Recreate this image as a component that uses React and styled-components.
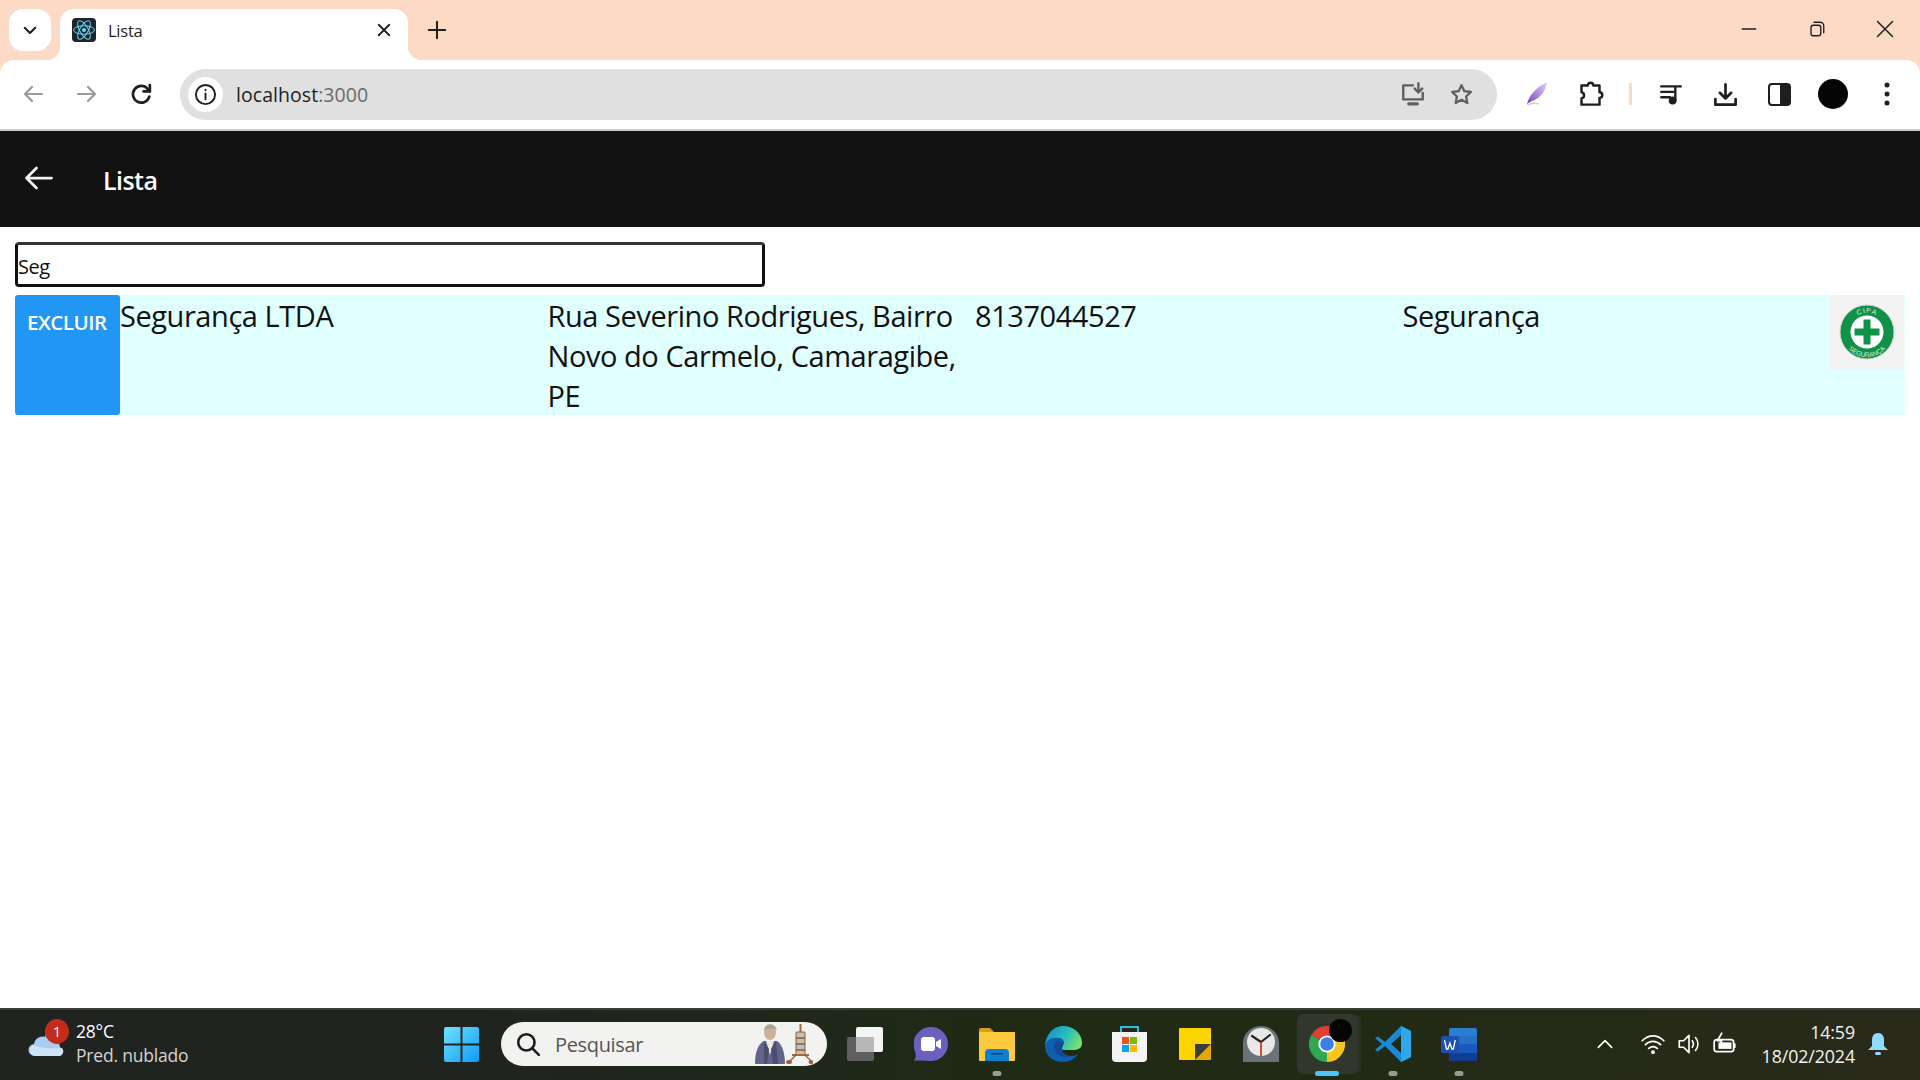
import React from 'react';
import styled, { createGlobalStyle } from 'styled-components';

const uiFont = `"Open Sans", "Noto Sans", sans-serif`;
const peach = '#fddac6';

const Global = createGlobalStyle`
  html, body { margin: 0; padding: 0; height: 100%; background: #fff; }
  * { box-sizing: border-box; }
  body { font-family: ${uiFont}; overflow: hidden; }
`;

const Screen = styled.div`
  width: 1920px;
  height: 1080px;
  display: flex;
  flex-direction: column;
`;

const TabStrip = styled.div`
  height: 60px;
  flex: none;
  background: ${peach};
  display: flex;
  align-items: flex-end;
  padding-left: 9px;
`;
const TabMenu = styled.div`
  width: 42px;
  height: 42px;
  margin-bottom: 9px;
  background: #fff;
  border-radius: 14px;
  display: flex;
  align-items: center;
  justify-content: center;
`;
const Tab = styled.div`
  width: 348px;
  height: 51px;
  margin-left: 9px;
  background: #fff;
  border-radius: 14px 14px 0 0;
  display: flex;
  align-items: center;
  padding: 0 15px 9px 12px;
  color: #1f1f1f;
  font-size: 16.5px;
  letter-spacing: -0.25px;
  position: relative;
  &::before, &::after {
    content: '';
    position: absolute;
    bottom: 0;
    width: 14px;
    height: 14px;
  }
  &::before {
    left: -14px;
    background: radial-gradient(circle at 0 0, ${peach} 14px, #fff 14.5px);
  }
  &::after {
    right: -14px;
    background: radial-gradient(circle at 100% 0, ${peach} 14px, #fff 14.5px);
  }
`;
const TabTitle = styled.span`
  margin-left: 12px;
  flex: 1;
  padding-top: 1px;
`;
const NewTab = styled.div`
  width: 58px;
  height: 30px;
  margin-bottom: 15px;
  display: flex;
  align-items: center;
  justify-content: center;
`;
const WindowButtons = styled.div`
  margin-left: auto;
  height: 60px;
  display: flex;
  align-items: center;
  padding: 0 1px 2px 0;
`;
const WindowButton = styled.div`
  width: 68px;
  display: flex;
  justify-content: center;
`;

const ToolbarShell = styled.div`
  flex: none;
  background: ${peach};
`;
const Toolbar = styled.div`
  height: 71px;
  background: #fff;
  border-bottom: 2px solid #c9c9c9;
  border-radius: 14px 14px 0 0;
  display: flex;
  align-items: center;
  padding: 0 6px 1px 6px;
`;
const NavButton = styled.div`
  width: 54px;
  display: flex;
  justify-content: center;
  flex: none;
`;
const AddressBar = styled.div`
  width: 1317px;
  height: 51px;
  margin-left: 12px;
  background: #e0e0e0;
  border-radius: 26px;
  display: flex;
  align-items: center;
  padding: 0 12px 0 8px;
  flex: none;
`;
const SiteInfo = styled.div`
  width: 35px;
  height: 35px;
  background: #fff;
  border-radius: 50%;
  display: flex;
  align-items: center;
  justify-content: center;
`;
const Url = styled.div`
  margin-left: 13px;
  flex: 1;
  font-size: 19.5px;
  color: #1f1f1f;
  letter-spacing: 0.05px;
  span { color: #6a6a6a; }
`;
const BarIcon = styled.div`
  width: 48px;
  display: flex;
  justify-content: center;
`;
const ToolIcons = styled.div`
  margin-left: 13px;
  display: flex;
  align-items: center;
`;
const ToolIcon = styled.div`
  width: ${(p) => p.$w || 54}px;
  display: flex;
  justify-content: center;
`;
const Divider = styled.div`
  width: 3px;
  height: 22px;
  background: ${peach};
  margin: 0 12px 0 13px;
`;
const Avatar = styled.div`
  width: 30px;
  height: 30px;
  background: #050505;
  border-radius: 50%;
`;

const AppBar = styled.header`
  height: 96px;
  flex: none;
  background: #121212;
  display: flex;
  align-items: center;
  padding: 0 0 2px 24px;
  color: #fff;
`;
const AppTitle = styled.h1`
  margin: 3px 0 0 49px;
  font-size: 25px;
  font-weight: 600;
  letter-spacing: -0.55px;
`;

const Main = styled.main`
  flex: 1;
  padding: 15px 15px 0;
  background: #fff;
`;
const SearchInput = styled.input`
  display: block;
  width: 750px;
  height: 45px;
  padding: 3px 0 0 0;
  border: 3px solid #111;
  border-top-color: #333;
  border-radius: 4px;
  outline: none;
  font-family: ${uiFont};
  font-size: 20px;
  letter-spacing: -0.45px;
  color: #111;
  background: #fff;
`;
const ResultRow = styled.div`
  margin-top: 8px;
  height: 120px;
  display: flex;
  background: #e0ffff;
`;
const DeleteButton = styled.button`
  width: 105px;
  height: 120px;
  flex: none;
  border: none;
  border-radius: 3px;
  background: #2196f3;
  color: #fff;
  padding: 14px 0 0 12px;
  display: flex;
  align-items: flex-start;
  font-family: ${uiFont};
  font-size: 20.5px;
  font-weight: 600;
  line-height: 26px;
  letter-spacing: -0.45px;
`;
const Cell = styled.div`
  flex: 1;
  min-width: 0;
  padding-top: 1px;
  font-size: 29px;
  line-height: 40px;
  letter-spacing: -0.44px;
  color: #111;
`;
const LogoBox = styled.div`
  width: 75px;
  height: 75px;
  flex: none;
  background: #f3f3f3;
  display: flex;
  align-items: center;
  justify-content: center;
  margin-right: 1px;
  margin-left: -1px;
  padding-bottom: 1px;
`;

const Taskbar = styled.footer`
  height: 72px;
  flex: none;
  border-top: 2px solid #3c3e3a;
  padding-bottom: 2px;
  background: linear-gradient(90deg, #20231f 0%, #1f2420 25%, #1f2a16 50%, #212a14 70%, #2a2a1a 100%);
  color: #fff;
  display: flex;
  align-items: center;
`;
const Weather = styled.div`
  width: 428px;
  flex: none;
  display: flex;
  align-items: center;
  padding-left: 28px;
  position: relative;
`;
const Badge = styled.div`
  position: absolute;
  left: 45px;
  top: -2px;
  width: 24px;
  height: 25px;
  border-radius: 50%;
  background: #c42b1c;
  font-size: 15px;
  line-height: 24px;
  text-align: center;
  z-index: 1;
`;
const WeatherText = styled.div`
  margin-left: 10px;
  margin-top: -2px;
  font-size: 17.5px;
  line-height: 24px;
  letter-spacing: -0.2px;
  div + div { color: #d4d4d0; }
`;
const StartSlot = styled.div`
  width: 66px;
  flex: none;
  display: flex;
  justify-content: center;
`;
const SearchBox = styled.div`
  width: 326px;
  height: 44px;
  margin: 0 5px 0 7px;
  flex: none;
  border-radius: 22px;
  background: #f2f2f0;
  display: flex;
  align-items: center;
  padding: 0 14px 0 14px;
  color: #555;
  font-size: 20px;
  letter-spacing: -0.35px;
  span { margin-left: 14px; flex: 1; }
`;
const TaskSlot = styled.div`
  height: 60px;
  flex: none;
  display: flex;
  align-items: center;
  justify-content: center;
  position: relative;
  border-radius: 6px;
  background: ${(p) => (p.$active ? '#31372d' : 'transparent')};
  box-shadow: ${(p) => (p.$active ? '3px 0 0 -1px #2d3329, 6px 0 0 -2px #2a3026' : 'none')};
  width: ${(p) => (p.$active ? 60 : 66)}px;
  margin: ${(p) => (p.$active ? '0 3px' : '0')};
`;
const Dot = styled.div`
  position: absolute;
  bottom: -2px;
  left: 50%;
  transform: translateX(-50%);
  height: 5px;
  border-radius: 3px;
  width: ${(p) => (p.$active ? 24 : 9)}px;
  background: ${(p) => (p.$active ? '#4cc2ff' : '#9a9a96')};
`;
const Tray = styled.div`
  margin-left: auto;
  display: flex;
  align-items: center;
  padding-right: 32px;
`;
const TrayIcon = styled.div`
  width: 36px;
  display: flex;
  justify-content: center;
  margin-right: ${(p) => p.$gap || 0}px;
`;
const Clock = styled.div`
  margin: 0 13px 0 19px;
  text-align: right;
  font-size: 17.8px;
  line-height: 24px;
  letter-spacing: -0.1px;
  color: #f2f2f2;
`;

const Stroke = ({ s = 24, c = '#1f1f1f', w = 2, vb = 24, children }) => (
  <svg width={s} height={s} viewBox={`0 0 ${vb} ${vb}`} fill="none" stroke={c} strokeWidth={w} strokeLinecap="round" strokeLinejoin="round">
    {children}
  </svg>
);

const ReactFavicon = () => (
  <svg width="24" height="24" viewBox="0 0 24 24">
    <rect width="24" height="24" rx="4" fill="#20232a" />
    <circle cx="12" cy="12" r="2" fill="#61dafb" />
    <g fill="none" stroke="#61dafb" strokeWidth="1">
      <ellipse cx="12" cy="12" rx="10.5" ry="4.2" />
      <ellipse cx="12" cy="12" rx="10.5" ry="4.2" transform="rotate(60 12 12)" />
      <ellipse cx="12" cy="12" rx="10.5" ry="4.2" transform="rotate(120 12 12)" />
    </g>
  </svg>
);

const Feather = () => (
  <svg width="24" height="26" viewBox="0 0 24 26">
    <defs>
      <linearGradient id="fth" x1="0" y1="1" x2="1" y2="0">
        <stop offset="0" stopColor="#7b3fc4" />
        <stop offset="1" stopColor="#e6d2f8" />
      </linearGradient>
    </defs>
    <path d="M2 23C4 14 12 6 22 1c-1 8-6 16-15 19l-5 3z" fill="url(#fth)" />
    <path d="M2 24c5-2 9-2 12-1" stroke="#ccc" strokeWidth="1.2" fill="none" />
  </svg>
);

const Puzzle = () => (
  <Stroke s={27} w={2.2} c="#1f1f1f">
    <path d="M4 4h5.5a2.5 2.5 0 0 1 5 0H20v6a2.500 2.500 0 0 1 0 5v6H4v-5.500a2.800 2.800 0 0 0 0-5.500z" />
  </Stroke>
);

const Logo = () => (
  <svg width="56" height="56" viewBox="0 0 56 56">
    <circle cx="28" cy="28" r="27" fill="#0f9148" stroke="#cfd4d0" strokeWidth="1" />
    <circle cx="28" cy="28" r="16.5" fill="#fff" />
    <path d="M24.5 15.5h7V24.5h9v7h-9v9h-7v-9h-9v-7h9z" fill="#0f9148" />
    <path id="arcTop" d="M9 28A19 19 0 0 1 47 28" fill="none" />
    <path id="arcBot" d="M3 28A25 25 0 0 0 53 28" fill="none" />
    <text fontSize="7" fill="#d6f1df" fontFamily="Liberation Sans, sans-serif" letterSpacing="1" textAnchor="middle">
      <textPath href="#arcTop" startOffset="50%">CIPA</textPath>
    </text>
    <text fontSize="6.500" fill="#d6f1df" fontFamily="Liberation Sans, sans-serif" textAnchor="middle">
      <textPath href="#arcBot" startOffset="50%">SEGURANÇA</textPath>
    </text>
  </svg>
);

const CloudIcon = () => (
  <svg width="38" height="30" viewBox="0 0 38 30">
    <circle cx="23" cy="8" r="6" fill="#f09a2a" />
    <path d="M7 27a6 6 0 0 1-1-12 9 9 0 0 1 16-4 8 8 0 0 1 10 7 5 5 0 0 1 0 9z" fill="#a9cdf2" />
    <path d="M7 27a6 6 0 0 1-2-11c6 3 20 4 29 3a5 5 0 0 1-2 8z" fill="#cfe3f8" />
  </svg>
);

const StartIcon = () => (
  <svg width="35" height="35" viewBox="0 0 35 35">
    <defs>
      <linearGradient id="st" x1="0" y1="0" x2="1" y2="1">
        <stop offset="0" stopColor="#6fe3fb" />
        <stop offset="1" stopColor="#0f9bf5" />
      </linearGradient>
    </defs>
    <path d="M0 2a2 2 0 0 1 2-2h14.5v16.5H0zM18.5 0H33a2 2 0 0 1 2 2v14.5H18.5zM0 18.5h16.5V35H2a2 2 0 0 1-2-2zM18.5 18.5H35V33a2 2 0 0 1-2 2H18.5z" fill="url(#st)" />
  </svg>
);

const SearchGlass = () => (
  <Stroke s={26} w={2.4} c="#1c1c1c">
    <circle cx="10.5" cy="10.5" r="7.5" />
    <path d="M16 16l6 6" />
  </Stroke>
);

const Scientist = () => (
  <svg width="58" height="42" viewBox="0 0 58 42">
    <path d="M0 41c0-12 3-20 9-23h13c5 3 8 12 8 23z" fill="#62648a" />
    <path d="M11 18l4 14 4-14z" fill="#ece8de" />
    <path d="M9 18l5 8-2 15h-3zM21 18l-5 8 2 15h5z" fill="#4b4d70" />
    <ellipse cx="15" cy="9" rx="6" ry="8" fill="#cdb09a" />
    <path d="M9 7c0-6 11-8 13 0-3-2-9-2-13 0z" fill="#a5a59c" />
    <rect x="41" y="9" width="9" height="23" rx="1" fill="#cbbfa9" stroke="#8a5a36" />
    <path d="M41 15h9M41 21h9M41 27h9" stroke="#6d665c" strokeWidth="1.500" />
    <path d="M45.500 1v8M37 32h17" stroke="#a06a3e" strokeWidth="2" />
    <path d="M41 32l-6 6M50 32l6 6" stroke="#8a5a36" strokeWidth="1.200" />
    <ellipse cx="34" cy="39" rx="3" ry="2" fill="#a0603a" />
    <ellipse cx="56" cy="39" rx="2.500" ry="2" fill="#a0603a" />
  </svg>
);

const TaskView = () => (
  <svg width="36" height="34" viewBox="0 0 36 34">
    <rect x="0" y="10" width="27" height="24" rx="2" fill="#606060" />
    <rect x="9" y="0" width="27" height="25" rx="2" fill="#f4f4f4" />
    <rect x="9" y="10" width="18" height="15" fill="#b8b8b8" />
  </svg>
);

const Meet = () => (
  <svg width="34" height="34" viewBox="0 0 34 34">
    <path d="M17 0a17 17 0 0 1 0 34c-5 0-11-1-17 0 2-3 2-6 1-10A17 17 0 0 1 17 0z" fill="#6b5fc0" />
    <rect x="7" y="10" width="14" height="14" rx="3" fill="#fff" />
    <path d="M22 15l5-3v10l-5-3z" fill="#fff" />
  </svg>
);

const Folder = () => (
  <svg width="36" height="33" viewBox="0 0 36 33">
    <path d="M0 2a2 2 0 0 1 2-2h9l4 4h-15z" fill="#d99e12" />
    <path d="M0 4h36v28a1 1 0 0 1-1 1H1a1 1 0 0 1-1-1z" fill="#fcc93f" />
    <path d="M6 33V24a4 4 0 0 1 4-3h16a4 4 0 0 1 4 3v9z" fill="#0f80cf" />
    <rect x="12" y="25" width="12" height="1.5" fill="#063f70" />
  </svg>
);

const Edge = () => (
  <svg width="37" height="36" viewBox="0 0 37 36">
    <defs>
      <linearGradient id="eg" x1="0" y1="0.2" x2="1" y2="0.6">
        <stop offset="0" stopColor="#0f8fd0" />
        <stop offset="0.6" stopColor="#2fc0b8" />
        <stop offset="1" stopColor="#7be06a" />
      </linearGradient>
    </defs>
    <path d="M18 0c10 0 19 7 19 17 0 5-4 7-8 7H19c-3 0-3-3-1-5 2-3 0-7-5-7C6 12 1 16 0 22 0 9 8 0 18 0z" fill="url(#eg)" />
    <path d="M0 20c1-6 7-9 13-8 5 1 7 4 5 7-3 5 1 11 8 11 3 0 5-1 7-2-3 5-9 8-15 8C8 36 0 30 0 20z" fill="#0c5fae" />
    <path d="M11 15c4-1 8 1 7 4-3 5 1 11 8 11-8 3-17-1-17-9 0-2 0-4 2-6z" fill="#16489a" />
  </svg>
);

const Store = () => (
  <svg width="35" height="36" viewBox="0 0 35 36">
    <path d="M9 6V1h17v5" stroke="#34b6e6" strokeWidth="2" fill="none" />
    <path d="M0 6h35v26a4 4 0 0 1-4 4H4a4 4 0 0 1-4-4z" fill="#f4f4f4" />
    <rect x="10" y="11" width="7" height="7" fill="#f25022" />
    <rect x="18" y="11" width="7" height="7" fill="#7fba00" />
    <rect x="10" y="19" width="7" height="7" fill="#00a4ef" />
    <rect x="18" y="19" width="7" height="7" fill="#ffb900" />
  </svg>
);

const Sticky = () => (
  <svg width="32" height="32" viewBox="0 0 32 32">
    <path d="M1 0h30a1 1 0 0 1 1 1v15L16 32H1a1 1 0 0 1-1-1V1a1 1 0 0 1 1-1z" fill="#fcd500" />
    <path d="M16 32V16h16z" fill="#3c3c3c" />
    <path d="M16 32L32 16v15a1 1 0 0 1-1 1z" fill="#e6a800" />
  </svg>
);

const AlarmClock = () => (
  <svg width="36" height="36" viewBox="0 0 36 36">
    <path d="M0 36V17a18 17 0 0 1 36 0v19z" fill="#6b7378" />
    <ellipse cx="18" cy="16" rx="14" ry="14" fill="#e8e8e8" />
    <path d="M18 16L9 10M18 16L27 9" stroke="#222" strokeWidth="2.2" strokeLinecap="round" />
    <path d="M18 16v14" stroke="#c8401c" strokeWidth="1.8" />
  </svg>
);

const Chrome = () => (
  <svg width="36" height="36" viewBox="0 0 36 36">
    <path d="M18 18L2.4 9A18 18 0 0 1 33.6 9z" fill="#e0402f" />
    <path d="M18 18L33.6 9A18 18 0 0 1 18 36z" fill="#f7c520" />
    <path d="M18 18L18 36A18 18 0 0 1 2.4 9z" fill="#2fa84f" />
    <circle cx="18" cy="18" r="8.6" fill="#fff" />
    <circle cx="18" cy="18" r="6.8" fill="#3d7ee8" />
  </svg>
);

const VsCode = () => (
  <svg width="36" height="36" viewBox="0 0 36 36">
    <path d="M26 0l10 5v26l-10 5L10 20l-7 5.5L0 24l7-6-7-6 3-1.5L10 16z" fill="#1a8ad6" />
    <path d="M26 0l10 5v26l-10 5z" fill="#2fa8ea" />
    <path d="M26 9v18l-10-9z" fill="#1f2a16" />
  </svg>
);

const Word = () => (
  <svg width="36" height="33" viewBox="0 0 36 33">
    <rect x="8" y="0" width="28" height="33" rx="2" fill="#2b7cd3" />
    <rect x="8" y="8" width="28" height="8" fill="#2372c5" />
    <rect x="8" y="16" width="28" height="9" fill="#185abd" />
    <rect x="8" y="25" width="28" height="8" fill="#103f91" />
    <rect x="0" y="8" width="18" height="17" rx="2" fill="#1c52ad" />
    <path d="M3.5 12l2 9h1.4l2-6 2 6h1.4l2-9" stroke="#fff" strokeWidth="1.3" fill="none" />
  </svg>
);

const taskApps = [
  { key: 'view', icon: <TaskView /> },
  { key: 'meet', icon: <Meet /> },
  { key: 'files', icon: <Folder />, dot: true },
  { key: 'edge', icon: <Edge /> },
  { key: 'store', icon: <Store /> },
  { key: 'sticky', icon: <Sticky /> },
  { key: 'clock', icon: <AlarmClock /> },
  { key: 'chrome', icon: <Chrome />, active: true },
  { key: 'code', icon: <VsCode />, dot: true },
  { key: 'word', icon: <Word />, dot: true },
];

const ChromeBadgeDot = styled.div`
  position: absolute;
  top: 5px;
  right: 5px;
  width: 23px;
  height: 23px;
  background: #050505;
  border-radius: 50%;
`;

export default function App() {
  return (
    <Screen>
      <Global />
      <TabStrip>
        <TabMenu>
          <Stroke s={18} w={2.8} c="#1f1f1f"><path d="M5 9l7 7 7-7" /></Stroke>
        </TabMenu>
        <Tab>
          <ReactFavicon />
          <TabTitle>Lista</TabTitle>
          <Stroke s={18} w={2.4}><path d="M5 5l14 14M19 5L5 19" /></Stroke>
        </Tab>
        <NewTab>
          <Stroke s={22} w={2.2}><path d="M12 3v18M3 12h18" /></Stroke>
        </NewTab>
        <WindowButtons>
          <WindowButton><Stroke s={18} w={1.8}><path d="M3 12h18" /></Stroke></WindowButton>
          <WindowButton>
            <Stroke s={18} w={1.8}><rect x="4" y="7" width="13" height="14" rx="3" /><path d="M8 3h8a5 5 0 0 1 5 5v9" /></Stroke>
          </WindowButton>
          <WindowButton><Stroke s={20} w={1.8}><path d="M3 3l18 18M21 3L3 21" /></Stroke></WindowButton>
        </WindowButtons>
      </TabStrip>
      <ToolbarShell>
        <Toolbar>
          <NavButton><Stroke s={24} w={2.2} c="#9a9a9a"><path d="M21 12H4M11 5l-7 7 7 7" /></Stroke></NavButton>
          <NavButton><Stroke s={24} w={2.2} c="#9a9a9a"><path d="M3 12h17M13 5l7 7-7 7" /></Stroke></NavButton>
          <NavButton><Stroke s={25} w={2.6}><path d="M19.500 14a8 8 0 1 1-1.600-7.400L20 9" /><path d="M20 3v6h-6" /></Stroke></NavButton>
          <AddressBar>
            <SiteInfo>
              <Stroke s={23} w={2}><circle cx="12" cy="12" r="10" /><path d="M12 11v6M12 7v.5" /></Stroke>
            </SiteInfo>
            <Url>localhost<span>:3000</span></Url>
            <BarIcon>
              <Stroke s={26} w={2.2} c="#5f5f5f"><path d="M12 4H3v13h18v-6" /><path d="M8 21h8" strokeWidth="3" /><path d="M17 2v8M13.500 7l3.500 3.500L20.500 7" /></Stroke>
            </BarIcon>
            <BarIcon>
              <Stroke s={25} w={2.2} c="#5f5f5f"><path d="M12 3l2.700 5.800 6.300.8-4.600 4.300 1.200 6.300-5.600-3.100-5.600 3.100 1.200-6.300L3 9.600l6.300-.8z" /></Stroke>
            </BarIcon>
          </AddressBar>
          <ToolIcons>
            <ToolIcon><Feather /></ToolIcon>
            <ToolIcon $w={52}><Puzzle /></ToolIcon>
            <Divider />
            <ToolIcon $w={54}>
              <Stroke s={26} w={2.2}><path d="M3 5h13M3 10h11M3 15h8M21 5h-5v13" /><circle cx="13.500" cy="18" r="2.500" fill="#1f1f1f" /></Stroke>
            </ToolIcon>
            <ToolIcon $w={54}>
              <Stroke s={27} w={2.4}><path d="M12 3v12M7 10.500l5 5 5-5M3 16v5h18v-5" /></Stroke>
            </ToolIcon>
            <ToolIcon $w={54}>
              <svg width="23" height="23" viewBox="0 0 23 23">
                <rect x="1" y="1" width="21" height="21" rx="3" fill="#fff" stroke="#1f1f1f" strokeWidth="2" />
                <rect x="12" y="1" width="10" height="21" fill="#1f1f1f" />
              </svg>
            </ToolIcon>
            <ToolIcon $w={54}><Avatar /></ToolIcon>
            <ToolIcon $w={54}>
              <svg width="6" height="24" viewBox="0 0 6 24" fill="#1f1f1f">
                <circle cx="3" cy="3" r="2.500" /><circle cx="3" cy="12" r="2.500" /><circle cx="3" cy="21" r="2.500" />
              </svg>
            </ToolIcon>
          </ToolIcons>
        </Toolbar>
      </ToolbarShell>
      <AppBar>
        <Stroke s={30} w={2.2} c="#f0f0f0"><path d="M22 12H3M10 4l-8 8 8 8" /></Stroke>
        <AppTitle>Lista</AppTitle>
      </AppBar>
      <Main>
        <SearchInput defaultValue="Seg" />
        <ResultRow>
          <DeleteButton>EXCLUIR</DeleteButton>
          <Cell>Segurança LTDA</Cell>
          <Cell>Rua Severino Rodrigues, Bairro Novo do Carmelo, Camaragibe, PE</Cell>
          <Cell>8137044527</Cell>
          <Cell>Segurança</Cell>
          <LogoBox><Logo /></LogoBox>
        </ResultRow>
      </Main>
      <Taskbar>
        <Weather>
          <Badge>1</Badge>
          <CloudIcon />
          <WeatherText>
            <div>28°C</div>
            <div>Pred. nublado</div>
          </WeatherText>
        </Weather>
        <StartSlot><StartIcon /></StartSlot>
        <SearchBox>
          <SearchGlass />
          <span>Pesquisar</span>
          <Scientist />
        </SearchBox>
        {taskApps.map((app) => (
          <TaskSlot key={app.key} $active={app.active}>
            {app.icon}
            {app.active && <ChromeBadgeDot />}
            {(app.dot || app.active) && <Dot $active={app.active} />}
          </TaskSlot>
        ))}
        <Tray>
          <TrayIcon $gap={12}><Stroke s={20} w={2} c="#fff"><path d="M4 16l8-8 8 8" /></Stroke></TrayIcon>
          <TrayIcon>
            <Stroke s={26} w={1.6} c="#fff"><path d="M2 9c6-6 14-6 20 0M5 12.500c4-4 10-4 14 0M8 16c2.400-2 5.600-2 8 0" /><circle cx="12" cy="19.500" r="1" fill="#fff" /></Stroke>
          </TrayIcon>
          <TrayIcon>
            <Stroke s={26} w={1.5} c="#fff"><path d="M3 9v6h4l5 5V4L7 9z" /><path d="M15 9c1.500 2 1.500 4 0 6M18 6c3 3.500 3 8.500 0 12" /></Stroke>
          </TrayIcon>
          <TrayIcon>
            <Stroke s={26} w={1.6} c="#fff"><rect x="2" y="8" width="18" height="11" rx="2.500" /><rect x="6" y="10.500" width="12" height="6" fill="#fff" stroke="none" /><path d="M21 12v3" /><path d="M9 2L5 9h4l-2 5" /></Stroke>
          </TrayIcon>
          <Clock>
            <div>14:59</div>
            <div>18/02/2024</div>
          </Clock>
          <svg width="20" height="24" viewBox="0 0 20 24" fill="#8fdcff">
            <path d="M10 1c-4 0-6 3-6 7v6l-4 4h20l-4-4V8c0-4-2-7-6-7z" />
            <rect x="7" y="20" width="6" height="3" rx="1.500" />
          </svg>
        </Tray>
      </Taskbar>
    </Screen>
  );
}
